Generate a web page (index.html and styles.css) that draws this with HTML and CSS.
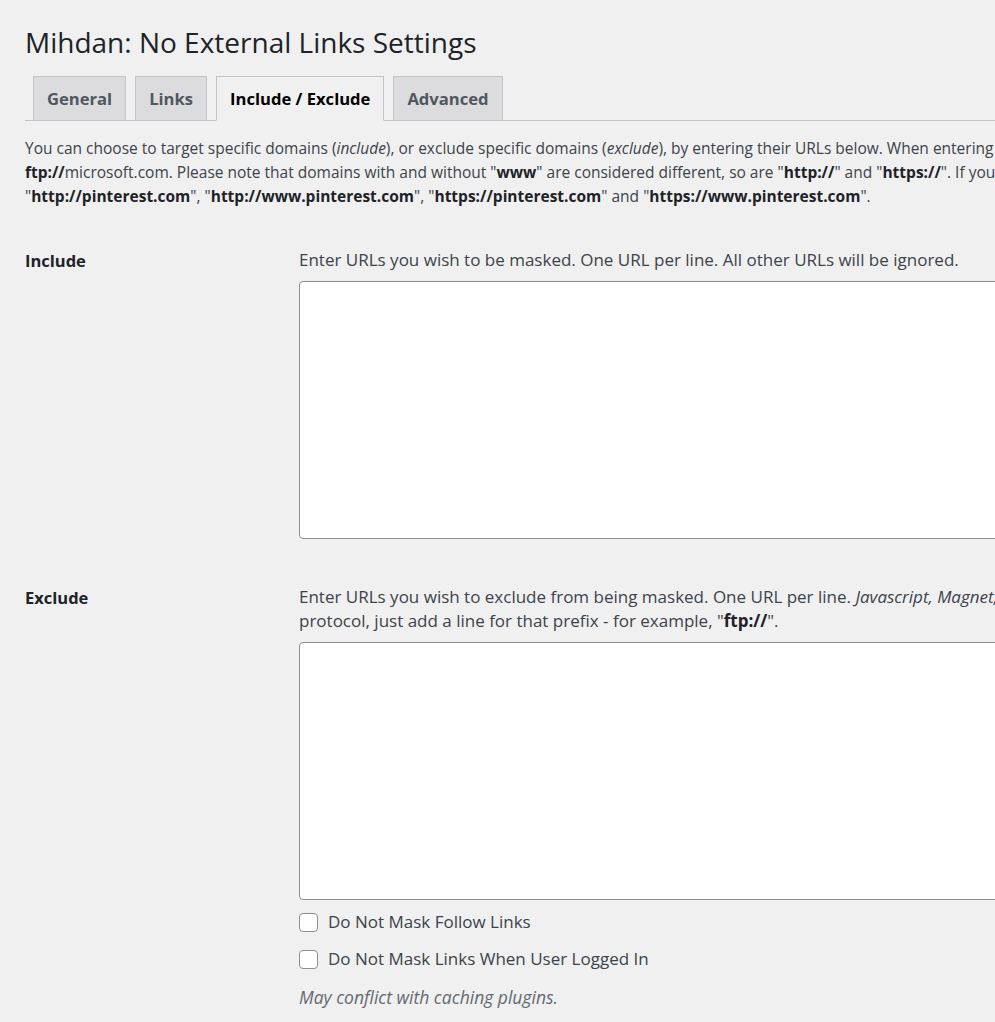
FILE: index.html
```html
<!DOCTYPE html>
<html lang="en">
<head>
<meta charset="utf-8">
<title>Mihdan: No External Links Settings</title>
<link rel="stylesheet" href="styles.css">
</head>
<body>
<div class="wrap">
  <h1 class="page-title">Mihdan: No External Links Settings</h1>
  <nav class="tabs">
    <a class="tab">General</a>
    <a class="tab">Links</a>
    <a class="tab tab-active">Include / Exclude</a>
    <a class="tab">Advanced</a>
  </nav>
  <p class="intro">You can choose to target specific domains (<em>include</em>), or exclude specific domains (<em>exclude</em>), by entering their URLs below. When entering domains, please specify the protocol as well, e.g. <b>http://</b>microsoft.com, <b>https://</b>microsoft.com or<br><b>ftp://</b>microsoft.com. Please note that domains with and without "<b>www</b>" are considered different, so are "<b>http://</b>" and "<b>https://</b>". If you want to target all variants of a domain, you must add all of them, e.g.<br>"<b>http://pinterest.com</b>", "<b>http://www.pinterest.com</b>", "<b>https://pinterest.com</b>" and "<b>https://www.pinterest.com</b>".</p>

  <div class="form-row row-include">
    <div class="label">Include</div>
    <div class="field">
      <p class="desc">Enter URLs you wish to be masked. One URL per line. All other URLs will be ignored.</p>
      <textarea class="urls"></textarea>
    </div>
  </div>

  <div class="form-row row-exclude">
    <div class="label">Exclude</div>
    <div class="field">
      <p class="desc">Enter URLs you wish to exclude from being masked. One URL per line. <em>Javascript, Magnet, Mailto, Skype and Tel</em> links are all excluded by default. To exclude a full<br>protocol, just add a line for that prefix - for example, "<b>ftp://</b>".</p>
      <textarea class="urls"></textarea>
      <label class="check"><span class="box"></span>Do Not Mask Follow Links</label>
      <label class="check"><span class="box"></span>Do Not Mask Links When User Logged In</label>
      <p class="note">May conflict with caching plugins.</p>
    </div>
  </div>
</div>
</body>
</html>
```

FILE: styles.css
```css
html, body {
  margin: 0;
  padding: 0;
  background: #f0f0f1;
  overflow: hidden;
}
body {
  width: 995px;
  height: 1022px;
  font-family: "Open Sans", "Noto Sans", sans-serif;
  color: #3c434a;
}
.wrap {
  width: 1600px;
  padding-left: 25px;
  padding-top: 25px;
}
.page-title {
  margin: 0;
  font-size: 28px;
  font-weight: 400;
  line-height: 34px;
  color: #1d2327;
}
.tabs {
  display: flex;
  margin-top: 17px;
  padding-left: 8px;
  border-bottom: 1px solid #c3c4c7;
  height: 44px;
  gap: 9px;
}
.tab {
  display: block;
  box-sizing: border-box;
  height: 45px;
  padding: 0 13px;
  border: 1px solid #c3c4c7;
  background: #dcdcde;
  color: #50575e;
  font-size: 16.6px;
  font-weight: 700;
  line-height: 43px;
  white-space: nowrap;
}
.tab-active {
  background: #f0f0f1;
  border-bottom-color: #f0f0f1;
  color: #000;
}
.intro {
  margin: 15px 0 0;
  font-size: 15.5px;
  line-height: 24px;
  white-space: nowrap;
}
.intro b, .desc b { color: #1d2327; }
.form-row {
  display: grid;
  grid-template-columns: 274px 1fr;
}
.row-include { margin-top: 40px; }
.row-exclude { margin-top: 46px; }
.label {
  font-size: 16.5px;
  font-weight: 700;
  color: #1d2327;
  line-height: 24px;
  padding-top: 1px;
}
.desc {
  margin: 0;
  font-size: 17px;
  line-height: 24px;
  white-space: nowrap;
}
.urls {
  display: block;
  box-sizing: border-box;
  width: 900px;
  height: 258px;
  margin-top: 9px;
  border: 1px solid #8c8f94;
  border-radius: 4px;
  background: #fff;
  resize: none;
  padding: 0;
}
.check {
  display: flex;
  align-items: center;
  gap: 10px;
  font-size: 17px;
  line-height: 24px;
  color: #3c434a;
}
.urls + .check { margin-top: 10px; }
.check + .check { margin-top: 13px; }
.box {
  display: block;
  width: 19px;
  height: 19px;
  box-sizing: border-box;
  border: 1px solid #8c8f94;
  border-radius: 4px;
  background: #fff;
}
.note {
  margin: 14px 0 0;
  font-size: 17.5px;
  font-style: italic;
  color: #646970;
  line-height: 24px;
}
```
